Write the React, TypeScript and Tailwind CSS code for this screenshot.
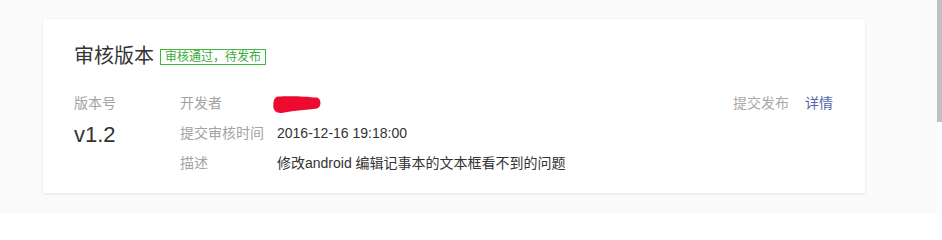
import React from 'react';

const FONT = { fontFamily: '"Liberation Sans", "Noto Sans CJK SC", sans-serif' };

// Red scribble that hides the developer name
function Redacted() {
  return (
    <svg width="48" height="17" viewBox="0 0 48 17" className="block">
      <path
        d="M5,0.6 C15,-0.4 33,0.3 44,1.6 C48.6,2.4 48.6,11.5 44,12.6 C34,14 22,14.6 10,16.8 C3,17.8 0,14.5 0.3,9 C0.6,3.5 2,1 5,0.6 Z"
        fill="#ec0b2f"
      />
    </svg>
  );
}

function InfoRow({ label, children }: { label: string; children?: React.ReactNode }) {
  return (
    <div className="flex h-[30px] items-center">
      <div className="w-[97px] shrink-0 text-[14px] text-[#a3a3a3]">{label}</div>
      <div className="flex-1 text-[14px] text-[#333]">{children}</div>
    </div>
  );
}

export default function App() {
  return (
    <div className="flex h-[213px] w-[942px] bg-[#fafafa]" style={FONT}>
      <div className="flex-1 pl-[43px] pt-[19px]">
        <div className="h-[174px] w-[822px] rounded-[2px] bg-white pl-[31px] pr-[32px] pt-[23px] shadow-[0_1px_3px_rgba(0,0,0,0.09)]">
          {/* Title */}
          <div className="flex h-[28px] items-center">
            <h2 className="text-[20px] leading-[28px] text-[#333]">审核版本</h2>
            <span className="ml-[6px] mt-[2px] border border-[#3fb83f] px-[4px] text-[12px] leading-[14px] text-[#3aaa3a]">
              审核通过，待发布
            </span>
          </div>

          <div className="mt-[18px] flex">
            {/* Version */}
            <div className="w-[106px] shrink-0">
              <div className="flex h-[30px] items-center text-[14px] text-[#a3a3a3]">版本号</div>
              <div className="flex h-[30px] items-center pt-[2px] text-[22px] text-[#333]">v1.2</div>
            </div>

            {/* Details */}
            <div className="flex-1">
              <InfoRow label="开发者">
                <div className="-ml-[4px] pt-[3px]">
                  <Redacted />
                </div>
              </InfoRow>
              <InfoRow label="提交审核时间">2016-12-16 19:18:00</InfoRow>
              <InfoRow label="描述">修改android 编辑记事本的文本框看不到的问题</InfoRow>
            </div>

            {/* Actions */}
            <div className="flex h-[30px] items-center gap-[16px] text-[14px]">
              <span className="text-[#a8a8a8]">提交发布</span>
              <span className="text-[#5466a8]">详情</span>
            </div>
          </div>
        </div>
      </div>

      {/* Scrollbar */}
      <div className="w-[5px] bg-white">
        <div className="h-[122px] bg-[#c1c1c1]" />
      </div>
    </div>
  );
}
